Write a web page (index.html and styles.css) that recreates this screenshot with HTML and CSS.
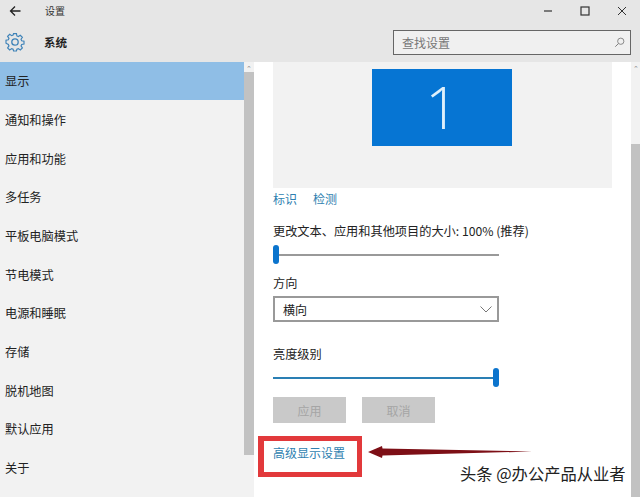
FILE: index.html
```html
<!DOCTYPE html>
<html lang="zh">
<head>
<meta charset="utf-8">
<title>设置</title>
<link rel="stylesheet" href="styles.css">
</head>
<body>
<div class="window">
  <header class="head">
    <div class="titlebar">
      <svg class="back" width="14" height="12" viewBox="0 0 14 12"><path d="M12.500 6H2.500M7 1.500 2.500 6 7 10.500" fill="none" stroke="#222" stroke-width="1.300"/></svg>
      <span class="title">设置</span>
      <div class="controls">
        <svg width="10" height="10" viewBox="0 0 10 10"><path d="M1 5h8" stroke="#333" stroke-width="1.200"/></svg>
        <svg width="10" height="10" viewBox="0 0 10 10"><rect x="1" y="1" width="8" height="8" fill="none" stroke="#333" stroke-width="1.200"/></svg>
        <svg width="10" height="10" viewBox="0 0 10 10"><path d="M1 1l8 8M9 1l-8 8" stroke="#333" stroke-width="1"/></svg>
      </div>
    </div>
    <div class="subbar">
      <svg class="gear" width="20" height="20" viewBox="0 0 20 20"><path d="M8.400 1h3.200l.5 2.600 1.600.7 2.200-1.500 2.300 2.300-1.500 2.200.7 1.600 2.600.5v3.200l-2.600.5-.7 1.600 1.500 2.200-2.300 2.300-2.200-1.500-1.600.7-.5 1.900H8.400l-.5-1.900-1.600-.7-2.200 1.500-2.300-2.300 1.500-2.200-.7-1.600L0 11.600V8.400l2.600-.5.700-1.600-1.500-2.200 2.300-2.300 2.200 1.500 1.600-.7z" transform="translate(1 .7) scale(.9)" fill="none" stroke="#3f83b8" stroke-width="1.300"/><circle cx="10" cy="10" r="3.200" fill="none" stroke="#3f83b8" stroke-width="1.300"/></svg>
      <span class="section">系统</span>
      <div class="search">
        <span>查找设置</span>
        <svg width="11" height="11" viewBox="0 0 13 13"><circle cx="8" cy="5" r="3.700" fill="none" stroke="#777"/><path d="M5.200 7.800 1.500 11.500" stroke="#777" stroke-width="1.100"/></svg>
      </div>
    </div>
  </header>
  <div class="body">
    <nav class="sidebar">
      <a class="item active">显示</a>
      <a class="item">通知和操作</a>
      <a class="item">应用和功能</a>
      <a class="item">多任务</a>
      <a class="item">平板电脑模式</a>
      <a class="item">节电模式</a>
      <a class="item">电源和睡眠</a>
      <a class="item">存储</a>
      <a class="item">脱机地图</a>
      <a class="item">默认应用</a>
      <a class="item">关于</a>
    </nav>
    <div class="scroll left-scroll"><span class="caret">⌃</span><div class="thumb"></div></div>
    <main class="content">
      <div class="preview"><div class="monitor">1</div></div>
      <div class="links"><a class="link">标识</a><a class="link">检测</a></div>
      <div class="label scale-label">更改文本、应用和其他项目的大小: 100% (推荐)</div>
      <div class="slider"><div class="track"></div><div class="knob knob-start"></div></div>
      <div class="label dir-label">方向</div>
      <div class="select"><span>横向</span><svg width="12" height="7" viewBox="0 0 12 7"><path d="M.5.500 6 6l5.500-5.500" fill="none" stroke="#777"/></svg></div>
      <div class="label bright-label">亮度级别</div>
      <div class="slider bright"><div class="track"></div><div class="knob knob-end"></div></div>
      <div class="buttons"><button class="btn">应用</button><button class="btn">取消</button></div>
      <div class="adv-row">
        <a class="link adv">高级显示设置</a>
        <svg class="arrow" width="164" height="12" viewBox="0 0 164 12"><path d="M0 6 14 0l.5 2.500L164 5.500 14.500 9.500 14 12z" fill="#7d0f16"/></svg>
      </div>
      <div class="mark">头条 @办公产品从业者</div>
    </main>
    <div class="scroll right-scroll"><span class="caret">⌃</span><div class="thumb"></div></div>
  </div>
</div>
</body>
</html>
```
FILE: styles.css
```css
*, *::before { box-sizing: border-box; }
html, body { margin: 0; padding: 0; }
body { width: 640px; height: 497px; overflow: hidden; background: #fff; font-family: "Noto Sans CJK SC", "Liberation Sans", sans-serif; color: #222; font-size: 12px; }
.window { width: 640px; height: 497px; display: flex; flex-direction: column; }
.head { height: 62px; background: #e6e6e6; flex: none; }
.titlebar { height: 21px; display: flex; align-items: center; padding-left: 8px; }
.back { margin-right: 23px; }
.title { font-size: 10px; color: #333; }
.controls { margin-left: auto; display: flex; gap: 27px; padding-right: 13px; }
.subbar { height: 41px; display: flex; align-items: center; padding-left: 5px; }
.gear { margin-right: 19px; }
.section { font-size: 11.500px; font-weight: 700; color: #222; }
.search { margin-left: auto; margin-right: 9px; align-self: flex-start; margin-top: 9px; width: 238px; height: 25px; border: 1px solid #666; background: #f0f0f0; display: flex; align-items: center; justify-content: space-between; padding: 0 5px 0 8px; color: #777; font-size: 12px; }
.body { flex: 1; display: flex; min-height: 0; }
.sidebar { width: 244px; flex: none; background: #f2f2f2; display: flex; flex-direction: column; }
.item { height: 38.700px; flex: none; padding: 1px 0 0 5px; display: flex; align-items: center; font-size: 12.200px; color: #222; }
.item.active { height: 38px; padding-top: 0; background: #8fbee6; }
.scroll { width: 10px; flex: none; background: #f2f2f2; }
.right-scroll { width: 9px; }
.caret { display: block; height: 10px; font-size: 7px; line-height: 12px; text-align: center; color: #888; overflow: hidden; }
.thumb { background: #c2c2c2; }
.left-scroll .thumb { height: 383px; }
.right-scroll .thumb { margin-top: 72px; height: 353px; }
.content { flex: 1; padding: 0 0 0 19px; min-width: 0; background: #fff; display: flex; flex-direction: column; position: relative; }
.preview { width: 339px; height: 126px; background: #f2f2f2; padding: 7px 0 0 99px; }
.monitor { width: 140px; height: 77px; background: #0675d3; color: #dff0fb; font-family: "Open Sans", "Liberation Sans", sans-serif; font-weight: 300; font-size: 59px; line-height: 75px; text-align: center; }
.links { display: flex; gap: 16px; margin-top: 1px; height: 18px; align-items: center; }
.link { color: #2f7fb0; font-size: 12px; }
.label { font-size: 12.200px; color: #222; line-height: 18px; }
.scale-label { margin-top: 15px; }
.slider { width: 226px; height: 20px; position: relative; margin-top: 4px; }
.track { position: absolute; left: 0; right: 0; top: 10px; height: 2px; background: #999; }
.knob { position: absolute; top: 1px; width: 6px; height: 19px; border-radius: 3px; background: #0b74cd; }
.knob-start { left: 0; }
.knob-end { right: 0; }
.dir-label { margin-top: 10px; }
.select { width: 226px; height: 26px; margin-top: 4px; border: 2px solid #999; display: flex; align-items: center; justify-content: space-between; padding: 0 5px 0 8px; font-size: 12px; background: #fff; }
.bright-label { margin-top: 23px; }
.bright { margin-top: 4px; }
.bright .track { background: #2a7fb4; }
.buttons { display: flex; gap: 16px; margin-top: 10px; }
.btn { width: 73px; height: 26px; border: 0; padding: 0; background: #c9c9c9; color: #a5a5a5; font: inherit; }
.adv-row { display: flex; align-items: center; margin-top: 13px; height: 40px; position: relative; }
.adv { position: relative; top: -4px; }
.arrow { position: absolute; left: 95px; top: 10px; }
.adv-row::before { content: ""; position: absolute; left: -15px; top: 0; width: 104px; height: 41px; border: 5px solid #e2393b; border-left-width: 6px; }
.mark { position: absolute; left: 206px; top: 399px; font-size: 16.300px; color: #222; white-space: nowrap; }
```
